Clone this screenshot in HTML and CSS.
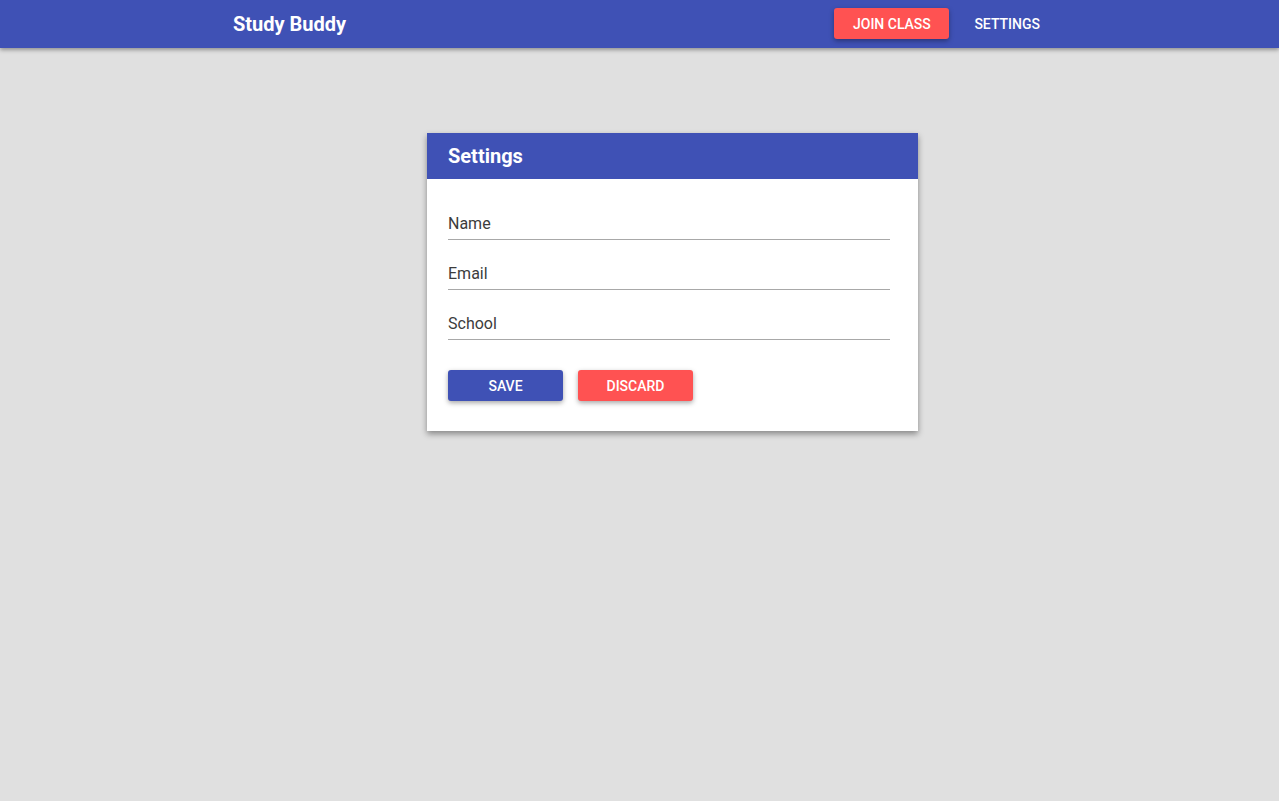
FILE: index.html
```html
<!DOCTYPE html>
<html>
<head>
<meta charset="utf-8">
<link rel="stylesheet" href="styles.css">
</head>
<body>
<header class="navbar">
  <div class="brand">Study Buddy</div>
  <nav class="nav-actions">
    <button class="btn btn-red nav-btn">JOIN CLASS</button>
    <a class="nav-link">SETTINGS</a>
  </nav>
</header>
<main class="main">
  <section class="card">
    <div class="card-header">Settings</div>
    <form class="card-body">
      <label class="field"><span class="field-label">Name</span></label>
      <label class="field"><span class="field-label">Email</span></label>
      <label class="field"><span class="field-label">School</span></label>
      <div class="actions">
        <button type="button" class="btn btn-blue">SAVE</button>
        <button type="button" class="btn btn-red">DISCARD</button>
      </div>
    </form>
  </section>
</main>
</body>
</html>
```

FILE: styles.css
```css
* { box-sizing: border-box; }
html, body { margin: 0; padding: 0; }
body {
  background: #e0e0e0;
  font-family: Roboto, "Liberation Sans", sans-serif;
  min-height: 801px;
}
.navbar {
  height: 48px;
  background: #3f51b5;
  display: flex;
  align-items: center;
  padding-left: 233px;
  box-shadow: 0 2px 4px rgba(0,0,0,0.35);
  position: relative;
  z-index: 1;
}
.brand {
  color: #fff;
  font-size: 20px;
  font-weight: 700;
  flex: 1;
}
.nav-actions {
  display: flex;
  align-items: center;
  margin-right: 239px;
}
.nav-link {
  color: #fff;
  font-size: 14px;
  font-weight: 500;
  margin-left: 25px;
}
.nav-btn {
  margin-top: -1px;
}
.btn {
  border: none;
  border-radius: 3px;
  width: 115px;
  height: 31px;
  color: #fff;
  font-family: Roboto, "Liberation Sans", sans-serif;
  font-size: 14px;
  font-weight: 500;
  padding: 0;
  box-shadow: 0 2px 5px rgba(0,0,0,0.35);
}
.btn-red { background: #ff5252; }
.btn-blue { background: #3f51b5; }
.main {
  display: flex;
  padding-top: 85px;
  padding-left: 427px;
}
.card {
  width: 491px;
  background: #fff;
  box-shadow: 0 3px 6px rgba(0,0,0,0.4);
}
.card-header {
  height: 46px;
  background: #3f51b5;
  color: #fff;
  font-size: 20px;
  font-weight: 700;
  display: flex;
  align-items: center;
  padding-left: 21px;
}
.card-body {
  padding: 26px 28px 30px 21px;
  margin: 0;
}
.field {
  display: block;
  height: 35px;
  border-bottom: 1px solid #a8a8a8;
  margin-bottom: 15px;
  position: relative;
}
.field-label {
  position: absolute;
  left: 0;
  top: 9px;
  font-size: 16px;
  color: #3c3c3c;
}
.actions {
  display: flex;
  gap: 15px;
  padding-top: 15px;
}
```
